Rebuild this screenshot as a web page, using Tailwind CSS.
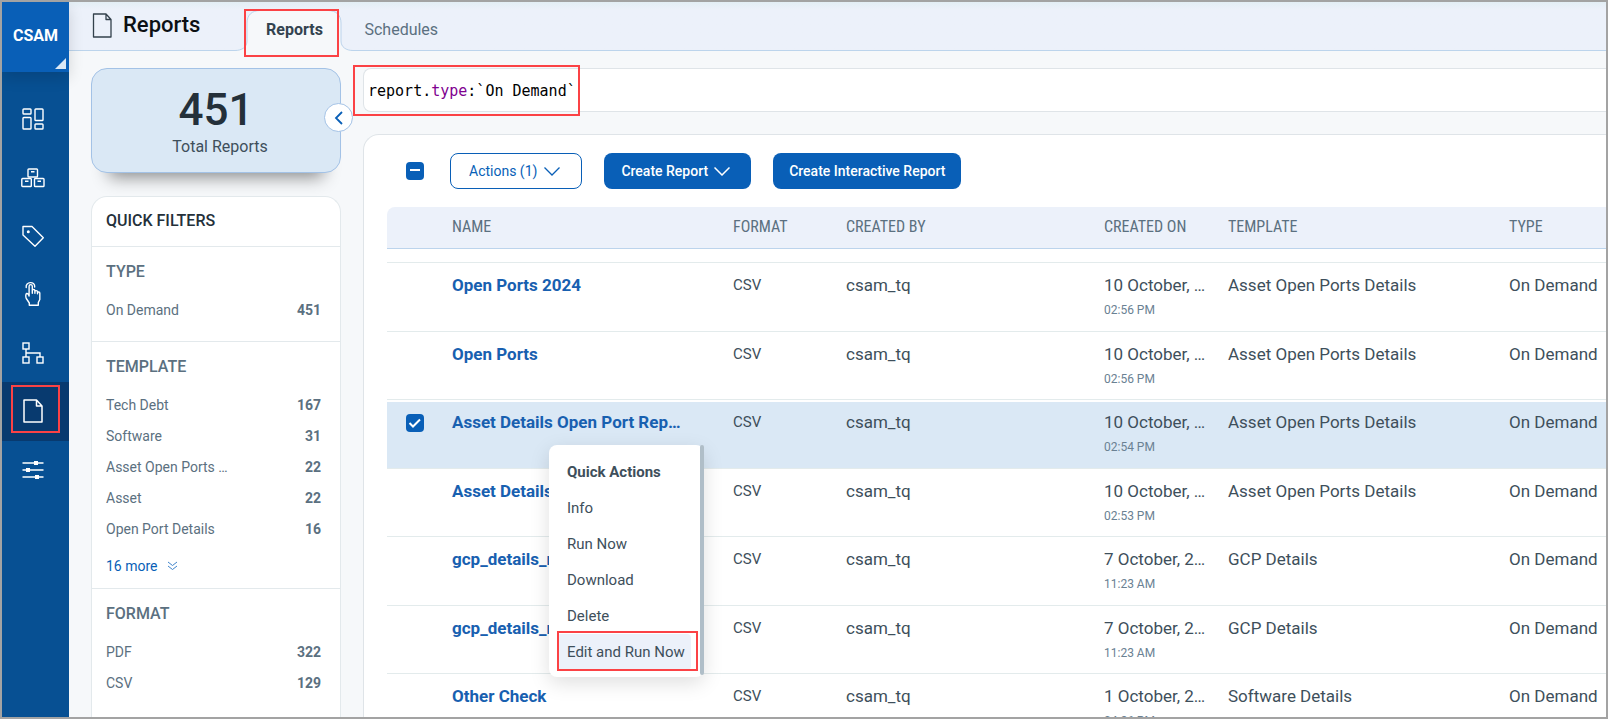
<!DOCTYPE html>
<html lang="en">
<head>
<meta charset="utf-8">
<meta name="viewport" content="width=device-width, initial-scale=1">
<title>CSAM - Reports</title>
<script src="https://cdn.jsdelivr.net/npm/@tailwindcss/browser@4"></script>
</head>
<body class="font-['Roboto',sans-serif] text-[#3e4f5b]">
<div class="flex h-screen overflow-hidden border-2 border-[#a3a3a3] bg-[#f6f8fa]">

  <!-- Module switcher and navigation -->
  <aside class="w-[67px] shrink-0 bg-[#075093] text-white">
    <button class="relative block h-[70px] w-full bg-[#095fb7] pb-0.5 text-base font-bold shadow-[0_6px_14px_rgba(0,0,0,0.14)]">CSAM
      <svg class="absolute right-[3px] bottom-[3px]" width="11" height="11" viewBox="0 0 11 11"><path d="M11 0v11H0z" fill="#dbe8f5"/></svg>
    </button>
    <nav class="mt-[18px] flex h-[409px] flex-col" aria-label="Main">
      <a href="#" aria-label="Dashboard" class="flex flex-1 items-center justify-center pr-1.5">
        <svg width="24" height="24" viewBox="0 0 24 24" fill="none" stroke="currentColor" stroke-width="1.4"><rect x="2" y="2" width="8" height="5" rx=".8"/><rect x="2" y="10.500" width="8" height="11.500" rx=".8"/><rect x="14" y="2" width="8" height="11.500" rx=".8"/><rect x="14" y="17" width="8" height="5" rx=".8"/></svg>
      </a>
      <a href="#" aria-label="Inventory" class="flex flex-1 items-center justify-center pr-1.5">
        <svg width="24" height="24" viewBox="0 0 24 24" fill="none" stroke="currentColor" stroke-width="1.4"><rect x="7" y="3" width="9.500" height="8" rx=".8"/><rect x=".8" y="12.500" width="9.500" height="8" rx=".8"/><rect x="13.500" y="12.500" width="9.500" height="8" rx=".8"/><path d="M10 5.800h3.500M4 15.300h3.500M16.500 15.300H20"/></svg>
      </a>
      <a href="#" aria-label="Tags" class="flex flex-1 items-center justify-center pr-1.5">
        <svg width="24" height="24" viewBox="0 0 24 24" fill="none" stroke="currentColor" stroke-width="1.4" stroke-linejoin="round"><path d="M2 2.500h9L22.300 13.800 14 22.200 2 11z"/><circle cx="7.300" cy="7.800" r=".8" fill="currentColor"/></svg>
      </a>
      <a href="#" aria-label="Responses" class="flex flex-1 items-center justify-center pr-1.5">
        <svg width="24" height="26" viewBox="0 0 24 26" fill="none" stroke="currentColor" stroke-width="1.4" stroke-linejoin="round" stroke-linecap="round"><path d="M5.200 6.500C4.200 .3 14.300 -.2 13.700 6"/><path d="M8.100 15V5.300c0-2.200 3.200-2.200 3.200 0v7M11.300 9.500c0-1.300 2.600-1.300 2.600.3v2.400M13.900 10.500c0-1.300 2.600-1.200 2.600.3v2M16.500 11.500c0-1 2.300-.9 2.300.5v6.500l-1.500 3v2.700H8.300v-2.200l-3-4.500c-.7-1.500-.8-4.500.3-5 1-.4 2 1 2.500 2.500"/></svg>
      </a>
      <a href="#" aria-label="Network" class="flex flex-1 items-center justify-center pr-1.5">
        <svg width="24" height="24" viewBox="0 0 24 24" fill="none" stroke="currentColor" stroke-width="1.400"><rect x="2" y="2" width="6" height="6"/><rect x="2" y="16" width="6" height="6"/><rect x="16" y="16" width="6" height="6"/><path d="M5 8v8M5 12h14v4"/></svg>
      </a>
      <a href="#" aria-label="Reports" aria-current="page" class="relative flex flex-1 items-center justify-center bg-[#083a6f] pr-1.5">
        <svg width="24" height="26" viewBox="0 0 24 26" fill="none" stroke="currentColor" stroke-width="1.500" stroke-linejoin="round"><path d="M3 2h12.500L21 8v16H3zM15.500 2v6H21"/></svg>
        <span class="absolute top-[3px] left-[9px] h-12 w-[49px] border-2 border-[#fb4245]"></span>
      </a>
      <a href="#" aria-label="Configuration" class="flex flex-1 items-center justify-center pr-1.5">
        <svg width="24" height="24" viewBox="0 0 24 24" fill="none" stroke="currentColor" stroke-width="1.400"><path d="M1.500 5h21M1.500 12h21M1.500 19h21"/><path d="M13 5h4M5 12h4M14 19h4" stroke-width="4"/></svg>
      </a>
    </nav>
  </aside>

  <div class="flex min-w-0 flex-1 flex-col">
    <!-- Page title and tabs -->
    <header class="flex h-[49px] shrink-0 border-b border-[#bcd4ec] bg-linear-to-b from-[#e3eef5] to-[#ecf1fa] to-15%">
      <div class="flex h-[46px] items-center gap-[10px] pl-[23px]">
        <svg width="21" height="25" viewBox="0 0 21 25" fill="none" stroke="#33414c" stroke-width="1.300" stroke-linejoin="round"><path d="M1.500 1H14l5 5.500V24H1.500zM14 1v5.500h5"/></svg>
        <h1 class="text-[22px] leading-7 font-medium text-[#0c1014]">Reports</h1>
      </div>
      <nav class="ml-[35px] flex" aria-label="Report views">
        <a href="#" aria-current="page" class="relative flex w-[118px] justify-center pt-4 text-base font-bold leading-6 text-[#33434f]">
          <svg class="absolute top-2 left-0" width="118" height="41" viewBox="0 0 118 41" fill="#f6f8fa"><path d="M0 40.500C7 40.500 12 37 12 31V13C12 5 17 .5 25 .5h68c8 0 13 4.500 13 12.500v18c0 6 5 9.500 12 9.500V42H0z"/><path d="M0 40.500C7 40.500 12 37 12 31V13C12 5 17 .5 25 .5h68c8 0 13 4.500 13 12.500v18c0 6 5 9.500 12 9.500" fill="none" stroke="#bcd4ec"/></svg>
          <span class="relative">Reports</span>
          <span class="absolute top-[7px] left-[9px] h-12 w-[95px] border-2 border-[#fb4245]"></span>
        </a>
        <a href="#" class="pt-4 pl-[11px] text-base leading-6 text-[#5b7080]">Schedules</a>
      </nav>
    </header>

    <div class="flex min-h-0 flex-1 gap-[22px] pt-[17px] pl-[22px]">
      <!-- Summary and filters -->
      <div class="flex w-[250px] shrink-0 flex-col">
        <section class="relative h-[105px] shrink-0 rounded-2xl border border-[#a3c2e6] bg-[#dae8f5] pt-[17px] text-center shadow-[0_22px_16px_-18px_rgba(0,0,0,0.45)]">
          <p class="text-[44px] leading-[49px] font-medium text-[#24303a]">451</p>
          <p class="pl-2 text-base leading-6">Total Reports</p>
          <button aria-label="Collapse filters" class="absolute top-[34px] -right-[13px] flex size-[29px] items-center justify-center rounded-full border border-[#a3c2e6] bg-white text-[#095fb7]">
            <svg width="10" height="14" viewBox="0 0 10 14" fill="none" stroke="currentColor" stroke-width="1.800"><path d="M8 1 2 7l6 6"/></svg>
          </button>
        </section>
        <aside class="mt-[23px] min-h-0 flex-1 rounded-t-2xl border border-b-0 border-[#e3e9ec] bg-white text-sm text-[#5b7080]">
          <h2 class="flex h-[50px] items-center border-b border-[#e3e9ec] px-[14px] pb-0.5 text-base font-medium text-[#24303a]">QUICK FILTERS</h2>
          <section class="border-b border-[#e3e9ec] px-[14px] pt-[15px] pb-4">
            <h3 class="mb-3 text-base leading-5 font-medium">TYPE</h3>
            <ul class="pr-[5px]">
              <li class="flex h-[31px] items-center justify-between"><a href="#">On Demand</a><b>451</b></li>
            </ul>
          </section>
          <section class="border-b border-[#e3e9ec] px-[14px] pt-[15px] pb-3">
            <h3 class="mb-3 text-base leading-5 font-medium">TEMPLATE</h3>
            <ul class="pr-[5px]">
              <li class="flex h-[31px] items-center justify-between"><a href="#">Tech Debt</a><b>167</b></li>
              <li class="flex h-[31px] items-center justify-between"><a href="#">Software</a><b>31</b></li>
              <li class="flex h-[31px] items-center justify-between"><a href="#">Asset Open Ports …</a><b>22</b></li>
              <li class="flex h-[31px] items-center justify-between"><a href="#">Asset</a><b>22</b></li>
              <li class="flex h-[31px] items-center justify-between"><a href="#">Open Port Details</a><b>16</b></li>
            </ul>
            <button class="mt-3 flex h-5 items-center gap-[9px] text-[#095fb7]">16 more
              <svg width="11" height="10" viewBox="0 0 11 10" fill="none" stroke="#3f84cb"><path d="M1 1l4.500 3.500L10 1M1 5l4.500 3.500L10 5"/></svg>
            </button>
          </section>
          <section class="px-[14px] pt-[15px]">
            <h3 class="mb-3 text-base leading-5 font-medium">FORMAT</h3>
            <ul class="pr-[5px]">
              <li class="flex h-[31px] items-center justify-between"><a href="#">PDF</a><b>322</b></li>
              <li class="flex h-[31px] items-center justify-between"><a href="#">CSV</a><b>129</b></li>
            </ul>
          </section>
        </aside>
      </div>

      <main class="flex min-w-0 flex-1 flex-col">
        
        <div class="relative h-11 shrink-0 rounded-l-lg border border-r-0 border-[#dfe4e8] bg-white font-['DejaVu_Sans_Mono',monospace] text-[15px] leading-[44px]">
          <div aria-hidden="true" class="pl-1 whitespace-pre text-black">report.<span class="text-[#800090]">type</span>:`On Demand`</div>
          <input type="text" aria-label="Search reports" value="report.type:`On Demand`" class="absolute inset-0 w-full bg-transparent pl-1 text-transparent caret-black outline-none">
          <span class="pointer-events-none absolute -top-1 -left-[11px] h-[51px] w-[227px] border-2 border-[#fb4245]"></span>
        </div>

        <section class="mt-[22px] min-h-0 flex-1 overflow-hidden rounded-tl-2xl border-t border-l border-[#dfe4e8] bg-white pl-[23px]">
          <div class="flex items-center gap-[22px] py-[18px] pl-[19px] text-sm">
            <input type="checkbox" aria-label="Select all reports" class="mr-1 size-[18px] appearance-none rounded-sm bg-[#095fb7] bg-[linear-gradient(white,white)] bg-[size:10px_2px] bg-[position:center_7px] bg-no-repeat">
            <button class="flex h-9 items-center gap-[7px] rounded-lg border border-[#095fb7] pr-[21px] pl-[18px] text-[#095fb7]">Actions (1)
              <svg width="16" height="9" viewBox="0 0 16 9" fill="none" stroke="currentColor" stroke-width="1.300"><path d="M.5.5 8 8 15.500.5"/></svg>
            </button>
            <button class="flex h-9 items-center gap-[6px] rounded-lg bg-[#095fb7] pr-[21px] pl-[17px] font-medium text-white">Create Report
              <svg width="16" height="9" viewBox="0 0 16 9" fill="none" stroke="currentColor" stroke-width="1.500"><path d="M.5.5 8 8 15.500.5"/></svg>
            </button>
            <button class="h-9 rounded-lg bg-[#095fb7] px-4 font-medium text-white">Create Interactive Report</button>
          </div>

          <table class="w-full table-fixed border-separate border-spacing-0 text-left text-[17px] leading-6">
            <colgroup><col class="w-[65px]"><col class="w-[281px]"><col class="w-[113px]"><col class="w-[258px]"><col class="w-[124px]"><col class="w-[281px]"><col></colgroup>
            <thead class="font-['Roboto_Condensed','Roboto',sans-serif] text-base leading-6 text-[#5b7080] [&_th]:h-[42px] [&_th]:border-b [&_th]:border-[#bcd4ec] [&_th]:bg-[#ecf1fa] [&_th]:pb-0.5 [&_th]:font-normal">
              <tr><th class="rounded-tl-lg"></th><th>NAME</th><th>FORMAT</th><th>CREATED BY</th><th>CREATED ON</th><th>TEMPLATE</th><th>TYPE</th></tr>
            </thead>
            <tbody class="[&_td]:border-t-2 [&_td]:border-b [&_td]:border-t-white [&_td]:border-b-[#e3ebec] [&_td]:pt-2 [&_td]:align-top [&>tr:nth-child(even)]:h-[69px] [&>tr:nth-child(odd)]:h-[68px]">
              <tr class="h-[14px]!"><td colspan="7" class="pt-0!"></td></tr>
              <tr><td></td><td><a href="#" class="font-bold text-[#1860b0]">Open Ports 2024</a></td><td class="text-[15px]">CSV</td><td>csam_tq</td><td>10 October, …<div class="pt-1 text-xs leading-[18px] text-[#6a8193]">02:56 PM</div></td><td>Asset Open Ports Details</td><td>On Demand</td></tr>
              <tr><td></td><td><a href="#" class="font-bold text-[#1860b0]">Open Ports</a></td><td class="text-[15px]">CSV</td><td>csam_tq</td><td>10 October, …<div class="pt-1 text-xs leading-[18px] text-[#6a8193]">02:56 PM</div></td><td>Asset Open Ports Details</td><td>On Demand</td></tr>
              <tr class="[&>td]:bg-[#dae8f5] [&>td]:bg-clip-padding">
                <td><label class="relative mt-1 ml-[19px] block size-[18px]"><input type="checkbox" checked aria-label="Select Asset Details Open Port Report" class="block size-[18px] appearance-none rounded-sm bg-[#095fb7]"><svg class="pointer-events-none absolute inset-0" width="18" height="18" viewBox="0 0 18 18" fill="none" stroke="#fff" stroke-width="2"><path d="M3.500 9 7 12.500 14 5.500"/></svg></label></td>
                <td class="relative"><a href="#" class="font-bold text-[#1860b0]">Asset Details Open Port Rep…</a>
                  <!-- Row context menu -->
                  <div role="menu" aria-label="Quick Actions" class="absolute top-[43px] left-[97px] z-10 h-[232px] w-[155px] rounded-lg bg-white pt-[9px] pl-2 text-[15px] leading-5 shadow-[0_6px_20px_rgba(0,0,0,0.13)]">
                    <p class="flex h-9 items-center px-[10px] font-bold">Quick Actions</p>
                    <button role="menuitem" class="flex h-9 w-[134px] items-center rounded-sm px-[10px]">Info</button>
                    <button role="menuitem" class="flex h-9 w-[134px] items-center rounded-sm px-[10px]">Run Now</button>
                    <button role="menuitem" class="flex h-9 w-[134px] items-center rounded-sm px-[10px]">Download</button>
                    <button role="menuitem" class="flex h-9 w-[134px] items-center rounded-sm px-[10px]">Delete</button>
                    <button role="menuitem" class="relative flex h-9 w-[134px] items-center rounded-sm bg-[#ecf1fa] px-[10px] whitespace-nowrap">Edit and Run Now<span class="absolute -top-[3px] left-0 h-10 w-[141px] border-2 border-[#fb4245]"></span></button>
                    <span class="absolute top-0 right-0 h-[230px] w-1 rounded-sm bg-[#b0bec8]"></span>
                  </div>
                </td>
                <td class="text-[15px]">CSV</td><td>csam_tq</td><td>10 October, …<div class="pt-1 text-xs leading-[18px] text-[#6a8193]">02:54 PM</div></td><td>Asset Open Ports Details</td><td>On Demand</td></tr>
              <tr><td></td><td><a href="#" class="font-bold text-[#1860b0]">Asset Details</a></td><td class="text-[15px]">CSV</td><td>csam_tq</td><td>10 October, …<div class="pt-1 text-xs leading-[18px] text-[#6a8193]">02:53 PM</div></td><td>Asset Open Ports Details</td><td>On Demand</td></tr>
              <tr><td></td><td><a href="#" class="font-bold text-[#1860b0]">gcp_details_r</a></td><td class="text-[15px]">CSV</td><td>csam_tq</td><td>7 October, 2…<div class="pt-1 text-xs leading-[18px] text-[#6a8193]">11:23 AM</div></td><td>GCP Details</td><td>On Demand</td></tr>
              <tr><td></td><td><a href="#" class="font-bold text-[#1860b0]">gcp_details_r</a></td><td class="text-[15px]">CSV</td><td>csam_tq</td><td>7 October, 2…<div class="pt-1 text-xs leading-[18px] text-[#6a8193]">11:23 AM</div></td><td>GCP Details</td><td>On Demand</td></tr>
              <tr><td></td><td><a href="#" class="font-bold text-[#1860b0]">Other Check</a></td><td class="text-[15px]">CSV</td><td>csam_tq</td><td>1 October, 2…<div class="pt-1 text-xs leading-[18px] text-[#6a8193]">04:26 PM</div></td><td>Software Details</td><td>On Demand</td></tr>
            </tbody>
          </table>
        </section>
      </main>
    </div>
  </div>
</div>
</body>
</html>
